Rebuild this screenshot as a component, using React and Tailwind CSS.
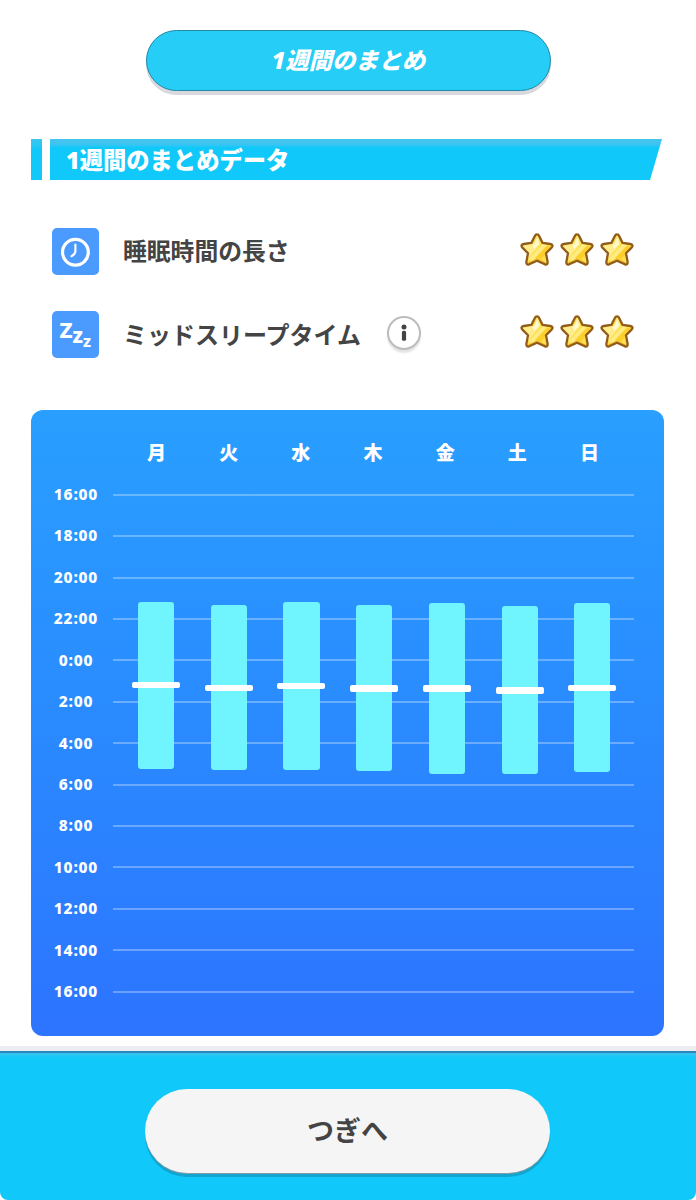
import { clsx } from "clsx";

const DAYS = ["月", "火", "水", "木", "金", "土", "日"];

const HOURS = [
  "16:00", "18:00", "20:00", "22:00", "0:00", "2:00", "4:00",
  "6:00", "8:00", "10:00", "12:00", "14:00", "16:00",
];

// offsets in px from the first grid line
const SLEEP = [
  { start: 107.5, end: 274.5, mid: 191 },
  { start: 111, end: 276, mid: 193.3 },
  { start: 107.5, end: 276, mid: 191.5 },
  { start: 111, end: 277, mid: 194 },
  { start: 109, end: 280, mid: 194 },
  { start: 112, end: 280, mid: 196 },
  { start: 108.5, end: 278, mid: 193.3 },
];

const STAR =
  "M17 2.4Q18.5 2.4 19.3 4.2L22.6 10.9L30.2 12Q34 12.8 31.6 15.6L26 21.2L27.6 29.6Q27.9 33.3 24.8 32.3L17 28.8L9.2 32.3Q6.1 33.3 6.4 29.6L8 21.2L2.4 15.6Q0 12.8 3.8 12L11.4 10.9L14.7 4.2Q15.5 2.4 17 2.4Z";

function Star() {
  return (
    <svg viewBox="0 0 34 35" className="h-[35px] w-[34px]">
      <defs>
        <clipPath id="star-clip">
          <path d={STAR} />
        </clipPath>
      </defs>
      <path d={STAR} fill="#fee04f" />
      <g clipPath="url(#star-clip)">
        <path d="M2 10L14 12L18 2L20 12L8 27Z" fill="#fff1a0" opacity="0.75" />
        <path d="M13 14L17 6L19.5 12L14 17Z" fill="#fffce6" opacity="0.75" />
        <path d="M9 27L25 10L27.5 12L12 30Z" fill="#fff3a8" opacity="0.6" />
        <path d="M15 26L27 14L31 14L21 28Z" fill="#fccf2c" />
        <path d="M7 31L17 26.5L27 31L25 33L17 30L9 33Z" fill="#f0b92c" />
      </g>
      <path d={STAR} fill="none" stroke="#905c18" strokeWidth="2.3" strokeLinejoin="round" />
    </svg>
  );
}

function Stars() {
  return (
    <div className="mb-[5px] ml-auto flex gap-[6px]">
      <Star />
      <Star />
      <Star />
    </div>
  );
}

function ClockIcon() {
  return (
    <svg viewBox="0 0 47 47" className="size-[47px] shrink-0">
      <rect width="47" height="47" rx="5" fill="#4b9bff" />
      <circle cx="23.4" cy="24.2" r="12.9" fill="none" stroke="#fff" strokeWidth="3.2" />
      <path d="M23.4 16.5V23.4Q23.2 26.5 19.5 28.2" fill="none" stroke="#fff" strokeWidth="2.1" strokeLinecap="round" />
    </svg>
  );
}

function SleepIcon() {
  return (
    <div className="flex size-[47px] shrink-0 items-start rounded-[5px] bg-[#4b9bff] pl-[7.5px] font-['Noto_Sans',sans-serif] font-extrabold leading-none text-white">
      <span className="mt-[7px] text-[22px]">Z</span>
      <span className="mt-[14px] text-[21px]">z</span>
      <span className="mt-[22px] text-[16px]">z</span>
    </div>
  );
}

function InfoButton() {
  return (
    <button className="mb-[3px] ml-[26px] flex size-[34px] items-center justify-center rounded-full border-2 border-[#bcbcbc] bg-white shadow-[0_3px_2px_#e4e4e4]">
      <svg viewBox="0 0 8 18" className="h-[18px] w-2">
        <circle cx="4" cy="2.9" r="2.5" fill="#444" />
        <rect x="1.9" y="6.8" width="4.2" height="10" rx="1.6" fill="#444" />
      </svg>
    </button>
  );
}

function SleepChart() {
  return (
    <section className="ml-[31px] h-[626px] w-[633px] rounded-xl bg-linear-to-b from-[#299fff] to-[#2d74ff] pt-[30px] text-white">
      <div className="ml-[89.5px] grid w-[505px] grid-cols-7 text-center text-[19px] font-black leading-[26px]">
        {DAYS.map((day) => (
          <span key={day}>{day}</span>
        ))}
      </div>
      <div className="relative mt-[8px]">
        {HOURS.map((hour, i) => (
          <div key={i} className="flex h-[41.42px] items-center">
            <span className="ml-[17px] w-[56px] text-center font-['Noto_Sans',sans-serif] text-[15.5px] font-extrabold tracking-[0.8px]">
              {hour}
            </span>
            <span className="ml-[9px] h-[2px] w-[521px] bg-white/30" />
          </div>
        ))}
        <div className="absolute top-[20.7px] left-[88.7px] grid w-[509px] grid-cols-7">
          {SLEEP.map((s, i) => (
            <div key={i} className="relative flex justify-center">
              <div
                className="absolute w-[36.2px] rounded-[3px] bg-[#70f5ff]"
                style={{ top: s.start - 0.4, height: s.end - s.start }}
              />
              <div
                className={clsx("absolute w-[48px] rounded-[2px] bg-white", i === 0 ? "h-[6px]" : "h-[6.5px]")}
                style={{ top: s.mid - 3.2 }}
              />
            </div>
          ))}
        </div>
      </div>
    </section>
  );
}

export default function App() {
  return (
    <main className="flex h-[1200px] w-[696px] flex-col overflow-hidden bg-white font-['Noto_Sans','Noto_Sans_CJK_JP',sans-serif] text-[#444]">
      <h1 className="mt-[30px] ml-[146px] flex h-[61px] w-[405px] items-center justify-center rounded-full border-[1.5px] border-[#2089a8] bg-[#25cdf7] text-[23.3px] font-black text-white italic shadow-[0_4px_0_#d7d9de]">
        1週間のまとめ
      </h1>

      <div className="mt-[48px] ml-[31px] flex h-[41px] gap-[8px]">
        <div className="w-[11px] bg-linear-to-b from-[#3cc5ef] to-[#10c8f9] to-25%" />
        <h2 className="flex w-[612px] items-center bg-linear-to-b from-[#43c3ef] from-10% to-[#10c8f9] to-20% pt-px pl-[16px] text-[23.3px] font-black text-white [clip-path:polygon(0_0,100%_0,600px_100%,0_100%)]">
          1週間のまとめデータ
        </h2>
      </div>

      <div className="mt-[48px] mr-[62px] ml-[52px] flex h-[47px] items-center">
        <ClockIcon />
        <span className="ml-[24px] pt-px text-[23.8px] font-bold">睡眠時間の長さ</span>
        <Stars />
      </div>
      <div className="mt-[35.5px] mr-[62px] ml-[52px] flex h-[47px] items-center">
        <SleepIcon />
        <span className="ml-[24px] pt-px text-[24px] font-bold">ミッドスリープタイム</span>
        <InfoButton />
        <Stars />
      </div>

      <div className="mt-[52.5px]">
        <SleepChart />
      </div>

      <div className="mt-[10px] h-[5px] shrink-0 bg-[#ecedf3]" />
      <footer className="h-[149px] shrink-0 rounded-b-lg border-t-2 border-[#2b86bd] bg-linear-to-b from-[#35c3ee] to-[#10c8f9] to-3% pt-[36px]">
        <button className="ml-[145px] block h-[84px] w-[405px] rounded-full bg-[#f5f5f5] text-[27px] font-bold shadow-[0_1px_0_#829da8,0_4px_0_#12a5cf]">
          つぎへ
        </button>
      </footer>
    </main>
  );
}
